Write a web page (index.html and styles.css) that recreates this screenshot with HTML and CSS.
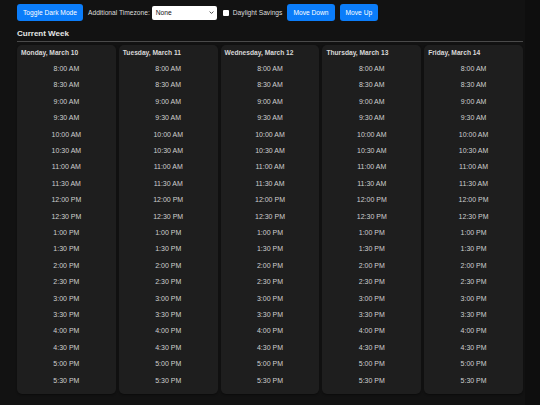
FILE: index.html
```html
<!DOCTYPE html>
<html>
<head>
<meta charset="utf-8">
<link rel="stylesheet" href="styles.css">
</head>
<body>
<div class="page">
  <div class="toolbar">
    <button class="btn">Toggle Dark Mode</button>
    <label class="lbl">Additional Timezone:</label>
    <div class="select"><span>None</span><svg class="chev" viewBox="0 0 8 8" width="5" height="5"><path d="M1 2.5 L4 5.5 L7 2.5" fill="none" stroke="#333" stroke-width="1.4"/></svg></div>
    <span class="check"></span>
    <label class="lbl dst">Daylight Savings</label>
    <button class="btn">Move Down</button>
    <button class="btn">Move Up</button>
  </div>
  <h2 class="title">Current Week</h2>
  <div class="rule"></div>
  <div class="week" id="week"></div>
</div>
<div class="track"></div>
<script>
const days=["Monday, March 10","Tuesday, March 11","Wednesday, March 12","Thursday, March 13","Friday, March 14"];
const times=[];
for(let h=8;h<18;h++){for(const m of ["00","30"]){const hh=h>12?h-12:h;times.push(hh+":"+m+" "+(h<12?"AM":"PM"));}}
const week=document.getElementById("week");
for(const d of days){
  const c=document.createElement("div");c.className="day";
  const t=document.createElement("div");t.className="day-title";t.textContent=d;c.appendChild(t);
  for(const tm of times){const s=document.createElement("div");s.className="slot";s.textContent=tm;c.appendChild(s);}
  week.appendChild(c);
}
</script>
</body>
</html>
```
FILE: styles.css
```css
html, body {
  margin: 0;
  padding: 0;
  height: 100%;
  background: #121212;
}
body {
  display: flex;
  font-family: "Liberation Sans", Arial, sans-serif;
  color: #ddd;
}
.page {
  width: 506px;
  padding: 4px 2px 0 17px;
  min-height: 401px;
}
.track {
  width: 15px;
  flex: none;
  background: #0e0e0e;
}
.toolbar {
  display: flex;
  align-items: center;
  height: 17px;
}
.btn {
  height: 17px;
  padding: 0 6px;
  border: none;
  border-radius: 3px;
  background: #0b7dfa;
  color: #fff;
  font-family: "Liberation Sans", Arial, sans-serif;
  font-size: 6.67px;
  margin-right: 5px;
  line-height: 17px;
}
.lbl {
  font-size: 6.67px;
  color: #ddd;
  margin-right: 2px;
}
.select {
  width: 65px;
  height: 14px;
  box-sizing: border-box;
  background: #fff;
  border-radius: 2px;
  display: flex;
  align-items: center;
  justify-content: space-between;
  padding: 0 3px 0 4px;
  font-size: 6.67px;
  color: #111;
  margin-right: 6px;
}
.chev { display: block; }
.check {
  width: 6px;
  height: 6px;
  background: #fff;
  border-radius: 1px;
  margin-right: 4px;
}
.dst { margin-right: 5px; }
.title {
  margin: 8px 0 0 0;
  font-size: 8px;
  line-height: 9px;
  font-weight: bold;
  color: #e6e6e6;
}
.rule {
  height: 1px;
  background: #4a4a4a;
  margin-top: 3px;
}
.week {
  margin-top: 3px;
  display: grid;
  grid-template-columns: repeat(5, 1fr);
  gap: 3px;
}
.day {
  background: #1e1e1e;
  border-radius: 5px;
  padding: 4px 4px 6px 4px;
  box-shadow: 0 1px 2px rgba(0,0,0,0.4);
}
.day-title {
  font-size: 6.67px;
  font-weight: bold;
  line-height: 8px;
  color: #d8d8d8;
  margin-bottom: 3.2px;
}
.slot {
  height: 16.42px;
  display: flex;
  align-items: center;
  justify-content: center;
  font-size: 7px;
  color: #cfcfcf;
}
```
